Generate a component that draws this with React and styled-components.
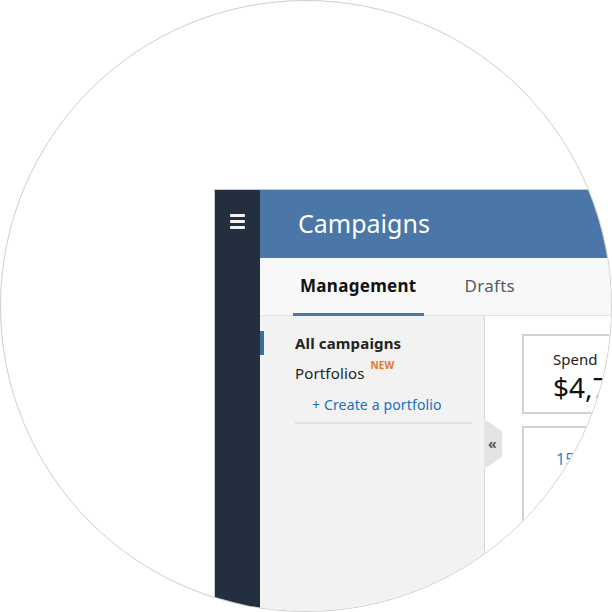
import React from "react";
import styled, { createGlobalStyle } from "styled-components";

const GlobalStyle = createGlobalStyle`
  html, body {
    margin: 0;
    padding: 0;
    background: #fff;
  }
  body {
    font-family: "Noto Sans", "Open Sans", sans-serif;
  }
`;

const Circle = styled.div`
  box-sizing: border-box;
  width: 612px;
  height: 612px;
  border: 1px solid #cfcfcf;
  border-radius: 50%;
  overflow: hidden;
  background: #fff;
  padding: 188px 0 0 213px;
`;

const Window = styled.div`
  display: flex;
  width: 520px;
  height: 520px;
  border: 1px solid #cacaca;
  border-right: 0;
  border-bottom: 0;
`;

const Sidebar = styled.div`
  flex: 0 0 45px;
  background: #232f3e;
  display: flex;
  justify-content: center;
  padding-top: 24px;
`;

const Burger = styled.div`
  display: flex;
  flex-direction: column;
  gap: 3px;
  width: 15px;

  span {
    display: block;
    height: 3px;
    background: #f2f2f2;
    border-radius: 1px;
  }
`;

const Main = styled.div`
  flex: 1;
  display: flex;
  flex-direction: column;
`;

const Header = styled.div`
  height: 68px;
  background: #4a76a8;
  display: flex;
  align-items: center;
  padding-left: 38px;
  color: #fff;
  font-size: 25px;
  padding-bottom: 2px;
  box-sizing: border-box;
`;

const Tabs = styled.div`
  height: 58px;
  background: #f8f8f8;
  display: flex;
  align-items: stretch;
  padding-left: 33px;
  gap: 34px;
  border-bottom: 1px solid #e2e2e2;
  box-sizing: border-box;
`;

const Tab = styled.div`
  display: flex;
  align-items: center;
  padding: 0 7px;
  font-size: 17px;
  letter-spacing: 0.3px;
  font-weight: ${p => (p.$active ? 700 : 400)};
  color: ${p => (p.$active ? "#111" : "#545b64")};
  border-bottom: 3px solid ${p => (p.$active ? "#4a76a8" : "transparent")};
  margin-bottom: -1px;
`;

const Body = styled.div`
  flex: 1;
  display: flex;
`;

const Panel = styled.div`
  position: relative;
  flex: 0 0 224px;
  background: #f2f2f2;
  border-right: 1px solid #d6d6d6;
  padding-top: 15px;
`;

const NavItem = styled.div`
  display: flex;
  align-items: center;
  height: ${p => p.$h || 30}px;
  border-left: 4px solid ${p => (p.$active ? "#3d6da3" : "transparent")};
  box-sizing: border-box;
  padding-left: ${p => (p.$indent ? 48 : 31)}px;
  font-size: ${p => (p.$link ? 14 : 15)}px;
  font-weight: ${p => (p.$active ? 700 : 400)};
  color: ${p => (p.$link ? "#1770c2" : "#222")};
  letter-spacing: 0.15px;
`;

const New = styled.sup`
  color: #e07a22;
  font-size: 10px;
  font-weight: 700;
  margin-left: 6px;
  align-self: flex-start;
  margin-top: 3px;
`;

const Divider = styled.div`
  height: 2px;
  background: #e0e0e0;
  margin: 5px 12px 0 35px;
`;

const Collapse = styled.div`
  position: absolute;
  left: 224px;
  top: 103px;
  width: 18px;
  height: 50px;
  background: #e4e4e4;
  clip-path: polygon(0 0, 100% 24%, 100% 76%, 0 100%);
  display: flex;
  align-items: center;
  justify-content: flex-start;
  padding-left: 4px;
  box-sizing: border-box;
  color: #555;
  font-size: 14px;
  font-weight: 700;
  line-height: 1;
`;

const Content = styled.div`
  flex: 1;
  background: #fff;
  padding: 18px 0 0 37px;
  display: flex;
  flex-direction: column;
  gap: 12px;
`;

const Card = styled.div`
  box-sizing: border-box;
  height: ${p => p.$h}px;
  border: 2px solid #d2d2d2;
  border-right: 0;
  padding: ${p => p.$pt}px 0 0 29px;
`;

const Label = styled.div`
  font-size: 15px;
  color: #222;
  line-height: 18px;
`;

const Value = styled.div`
  font-size: 28px;
  color: #111;
  line-height: 34px;
  margin-top: 2px;
  white-space: nowrap;
`;

const Count = styled.div`
  font-size: 16px;
  color: #1a8bd1;
  padding-left: 3px;
`;

export default function App() {
  return (
    <>
      <GlobalStyle />
      <Circle>
        <Window>
          <Sidebar>
            <Burger>
              <span />
              <span />
              <span />
            </Burger>
          </Sidebar>
          <Main>
            <Header>Campaigns</Header>
            <Tabs>
              <Tab $active>Management</Tab>
              <Tab>Drafts</Tab>
            </Tabs>
            <Body>
              <Panel>
                <NavItem $active $h={24}>All campaigns</NavItem>
                <NavItem $h={36}>
                  Portfolios<New>NEW</New>
                </NavItem>
                <NavItem $indent $link $h={26}>+ Create a portfolio</NavItem>
                <Divider />
                <Collapse>«</Collapse>
              </Panel>
              <Content>
                <Card $h={80} $pt={14}>
                  <Label>Spend</Label>
                  <Value>$4,721.86</Value>
                </Card>
                <Card $h={200} $pt={20}>
                  <Count>159</Count>
                </Card>
              </Content>
            </Body>
          </Main>
        </Window>
      </Circle>
    </>
  );
}
